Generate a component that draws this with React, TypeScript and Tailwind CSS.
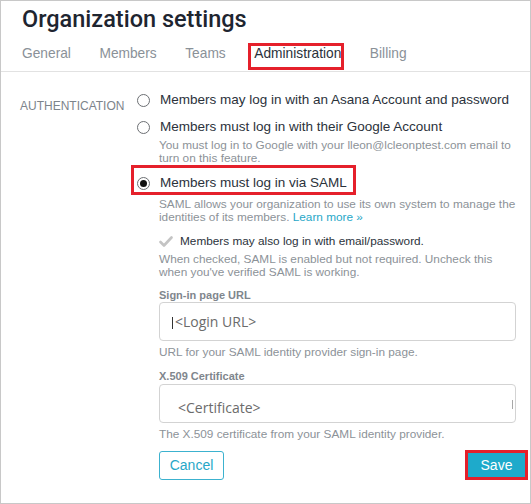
const Radio = ({ checked = false }: { checked?: boolean }) => (
  <span className="flex shrink-0 justify-center items-center w-[13px] h-[13px] rounded-full border border-[#6c6f73] bg-white">
    {checked && <span className="w-[7px] h-[7px] rounded-full bg-[#111]" />}
  </span>
);

const Hint = ({ children, className = "" }: { children: React.ReactNode; className?: string }) => (
  <p className={`text-[11.8px] leading-[12.5px] text-[#8c9298] whitespace-nowrap ${className}`}>{children}</p>
);

const FieldLabel = ({ children, className = "" }: { children: React.ReactNode; className?: string }) => (
  <p className={`text-[11px] leading-[14px] font-bold text-[#7f868d] ${className}`}>{children}</p>
);

const tabs = ["General", "Members", "Teams", "Administration", "Billing"];

export default function App() {
  return (
    <div className="w-[531px] h-[504px] bg-white border border-[#c8c8c8] overflow-hidden font-['Liberation_Sans',Arial,sans-serif]">
      <div className="pt-[4px] pb-[7px] pl-[21px] border-b border-[#e2e2e2]">
        <h1 className="text-[23.5px] leading-[29px] font-medium text-[#1e2530] font-['Roboto',sans-serif]">
          Organization settings
        </h1>
        <div className="flex gap-[28.5px] mt-[10px] text-[13.75px] leading-[20px]">
          {tabs.map((t) =>
            t === "Administration" ? (
              <span key={t} className="relative text-[#2a313a]">
                {t}
                <span className="absolute -top-[1px] -bottom-[6px] -left-[6px] -right-[3px] border-[3px] border-[#e5202b]" />
              </span>
            ) : (
              <span key={t} className="text-[#8a9198]">
                {t}
              </span>
            ),
          )}
        </div>
      </div>

      <div className="flex">
        <div className="w-[136px] shrink-0 pl-[19px] pt-[21px]">
          <span className="text-[12px] leading-[14px] text-[#7d848b] whitespace-nowrap">AUTHENTICATION</span>
        </div>

        <div className="flex-1 min-w-0 pt-[18px] pr-[14px] text-[13.5px] leading-[20px] text-[#2b323b]">
          <div className="flex gap-[10px] items-center whitespace-nowrap">
            <Radio />
            <span>Members may log in with an Asana Account and password</span>
          </div>

          <div className="flex gap-[10px] items-center mt-[7px]">
            <Radio />
            <span>Members must log in with their Google Account</span>
          </div>
          <Hint className="pl-[22px] mt-[2px]">
            You must log in to Google with your lleon@lcleonptest.com email to
            <br />
            turn on this feature.
          </Hint>

          <div className="relative flex gap-[10px] items-center mt-[9px] w-max">
            <Radio checked />
            <span>Members must log in via SAML</span>
            <span className="absolute -top-[8px] -bottom-[2px] -left-[6px] -right-[9px] border-[3px] border-[#e5202b]" />
          </div>

          <div className="pl-[22px]">
            <Hint className="mt-[5px]">
              SAML allows your organization to use its own system to manage the
              <br />
              identities of its members. <span className="text-[#27a7c8]">Learn more »</span>
            </Hint>

            <div className="flex gap-[7px] items-center mt-[10px] text-[11.8px] leading-[16px]">
              <svg width="14" height="11" viewBox="0 0 14 11" className="shrink-0">
                <path d="M1.5 6 L5 9.5 L12.5 1.5" fill="none" stroke="#c4c4c4" strokeWidth="2.6" strokeLinecap="round" strokeLinejoin="round" />
              </svg>
              <span>Members may also log in with email/password.</span>
            </div>

            <Hint className="mt-[4px]">
              When checked, SAML is enabled but not required. Uncheck this
              <br />
              when you've verified SAML is working.
            </Hint>

            <FieldLabel className="mt-[10px]">Sign-in page URL</FieldLabel>
            <div className="h-[39px] border border-[#d3d3d3] rounded-[4px] pl-[12px] pt-[9px] text-[14px] leading-[20px] font-['Open_Sans',sans-serif] flex items-start">
              <span className="w-px h-[12px] bg-[#333] mt-[5px] mr-[2px]" />
              <span className="text-[#6b6b6b]">&lt;Login URL&gt;</span>
            </div>
            <Hint className="mt-[5px]">URL for your SAML identity provider sign-in page.</Hint>

            <FieldLabel className="mt-[10px]">X.509 Certificate</FieldLabel>
            <div className="relative h-[39px] mt-px border border-[#d3d3d3] rounded-[4px] pl-[18px] pt-[13px] text-[14px] leading-[20px] font-['Open_Sans',sans-serif] text-[#6b6b6b]">
              &lt;Certificate&gt;
              <span className="absolute right-[2px] top-[15px] w-px h-[9px] bg-[#a8a8a8]" />
            </div>
            <Hint className="mt-[5px]">The X.509 certificate from your SAML identity provider.</Hint>

            <div className="flex justify-between items-center mt-[10px] -mr-[12px]">
              <button className="w-[65px] h-[29px] border border-[#3cb2cf] rounded-[3px] text-[14px] text-[#27a7c8] bg-white">
                Cancel
              </button>
              <button className="w-[63px] h-[30px] border-[3px] border-[#e5202b] bg-[#1eaacb] text-[14px] text-white">
                Save
              </button>
            </div>
          </div>
        </div>
      </div>
    </div>
  );
}
